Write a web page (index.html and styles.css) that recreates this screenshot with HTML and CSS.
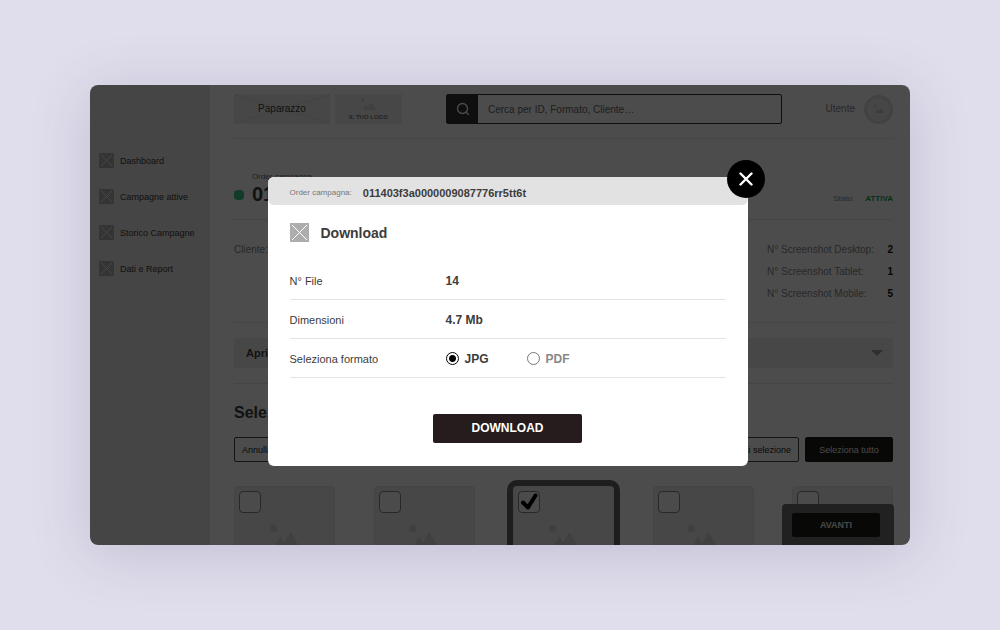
FILE: index.html
```html
<!DOCTYPE html>
<html lang="it">
  <head>
    <meta charset="UTF-8" />
    <meta name="viewport" content="width=device-width, initial-scale=1.0" />

    <title>Order campagna - Download</title>
    <link rel="stylesheet" href="styles.css" />
  </head>
  <body>
    <!-- shared shapes -->
    <svg class="symbols" width="0" height="0" aria-hidden="true">
      <symbol id="box" viewBox="0 0 19 19">
        <rect width="19" height="19" fill="#adadad" />
        <path d="M2 2l15 15M17 2L2 17" stroke="#fff" stroke-width="1" />
      </symbol>
      <symbol id="photo" viewBox="0 0 30 24">
        <circle cx="3.500" cy="4.500" r="3.800" />
        <path d="M3.500 24L10.500 12l6 12z" />
        <path d="M11 24L20.500 8 30 24z" />
      </symbol>
    </svg>

    <div class="window">
      <nav class="sidebar">
        <a href="#"><svg class="nav-icon"><use href="#box" /></svg>Dashboard</a>
        <a href="#"><svg class="nav-icon"><use href="#box" /></svg>Campagne attive</a>
        <a href="#"><svg class="nav-icon"><use href="#box" /></svg>Storico Campagne</a>
        <a href="#"><svg class="nav-icon"><use href="#box" /></svg>Dati e Report</a>
      </nav>

      <main class="content">
        <header class="topbar">
          <div class="brand">
            <svg class="brand-cross" viewBox="0 0 96 30" preserveAspectRatio="none">
              <path d="M1 1l94 28M95 1L1 29" stroke="#dcdcdc" fill="none" />
            </svg>
            <span>Paparazzo</span>
          </div>
          <div class="client-logo">
            <svg class="logo-photo"><use href="#photo" /></svg>
            <span>IL TUO LOGO</span>
          </div>
          <form class="search">
            <button type="button" aria-label="Cerca">
              <svg width="14" height="14" viewBox="0 0 14 14" fill="none" stroke="#fff" stroke-width="1.300" stroke-linecap="round">
                <circle cx="6.500" cy="6.500" r="5" />
                <path d="M10.200 10.200l2.300 2.300" />
              </svg>
            </button>
            <input type="text" aria-label="Cerca" placeholder="Cerca per ID, Formato, Cliente…" />
          </form>
          <div class="user">
            <span>Utente</span>
            <div class="avatar"><svg class="avatar-photo"><use href="#photo" /></svg></div>
          </div>
        </header>

        <section class="order">
          <span class="status-dot"></span>
          <div class="order-id">
            <p>Order campagna</p>
            <h1>011</h1>
          </div>
          <p class="status">Stato: <strong>ATTIVA</strong></p>
        </section>

        <section class="details">
          <p>Cliente:</p>
          <dl>
            <div><dt>N° Screenshot Desktop:</dt><dd>2</dd></div>
            <div><dt>N° Screenshot Tablet:</dt><dd>1</dd></div>
            <div><dt>N° Screenshot Mobile:</dt><dd>5</dd></div>
          </dl>
        </section>

        <section class="accordion">
          <button type="button">
            Apri
            <svg width="12" height="6" viewBox="0 0 12 6"><path d="M0 0h12L6 6z" fill="#999" /></svg>
          </button>
        </section>

        <section class="selection">
          <h2>Seleziona</h2>
          <div class="actions">
            <button type="button" class="btn">Annulla</button>
            <button type="button" class="btn push">Inverti selezione</button>
            <button type="button" class="btn btn-dark">Seleziona tutto</button>
          </div>
          <div class="cards">
            <div class="card">
              <input type="checkbox" aria-label="Screenshot 1" />
              <svg class="card-photo"><use href="#photo" /></svg>
            </div>
            <div class="card">
              <input type="checkbox" aria-label="Screenshot 2" />
              <svg class="card-photo"><use href="#photo" /></svg>
            </div>
            <div class="card selected">
              <input type="checkbox" aria-label="Screenshot 3" checked />
              <svg class="tick" viewBox="0 0 22 22" fill="none" stroke="#000" stroke-width="4" stroke-linecap="round" stroke-linejoin="round">
                <path d="M5 11.500l5 5 7.500-12" />
              </svg>
              <svg class="card-photo"><use href="#photo" /></svg>
            </div>
            <div class="card">
              <input type="checkbox" aria-label="Screenshot 4" />
              <svg class="card-photo"><use href="#photo" /></svg>
            </div>
            <div class="card">
              <input type="checkbox" aria-label="Screenshot 5" />
              <svg class="card-photo"><use href="#photo" /></svg>
            </div>
          </div>
        </section>
      </main>

      <div class="next-bar">
        <button type="button">AVANTI</button>
      </div>

      <div class="overlay">
        <div class="modal" role="dialog" aria-labelledby="modalTitle">
          <button type="button" class="close" aria-label="Chiudi">
            <svg width="14" height="14" viewBox="0 0 14 14" fill="none" stroke="#fff" stroke-width="2.400" stroke-linecap="round">
              <path d="M1.500 1.500l11 11M12.500 1.500l-11 11" />
            </svg>
          </button>
          <div class="modal-header">
            <span>Order campagna:</span>
            <strong>011403f3a0000009087776rr5tt6t</strong>
          </div>
          <form class="modal-body">
            <h3 id="modalTitle"><svg class="title-icon"><use href="#box" /></svg>Download</h3>
            <div class="row">
              <span class="row-label">N° File</span>
              <strong>14</strong>
            </div>
            <div class="row">
              <span class="row-label">Dimensioni</span>
              <strong>4.7 Mb</strong>
            </div>
            <div class="row">
              <span class="row-label">Seleziona formato</span>
              <div class="formats">
                <input type="radio" id="jpg" name="format" checked />
                <label for="jpg">JPG</label>
                <input type="radio" id="pdf" name="format" />
                <label for="pdf">PDF</label>
              </div>
            </div>
            <button type="button" class="download">DOWNLOAD</button>
          </form>
        </div>
      </div>
    </div>
  </body>
</html>
```
FILE: styles.css
```css
* {
  box-sizing: border-box;
}

body {
  height: 100vh;
  margin: 0;
  padding: 85px 90px;
  background-color: #e0deec;
  font-family: "Liberation Sans", Arial, sans-serif;
  font-size: 10px;
  line-height: 12px;
  color: #3c3c3c;
}

h1,
h2,
h3,
p,
dl,
dd {
  margin: 0;
}

button,
input {
  font-family: inherit;
}

button {
  padding: 0;
  border: none;
  cursor: pointer;
}

.symbols {
  position: absolute;
}

.window {
  position: relative;
  display: flex;
  height: 100%;
  overflow: hidden;
  border-radius: 8px;
  background-color: #fff;
  box-shadow: 0 8px 60px rgba(70, 60, 110, 0.2);
}

/* sidebar */
.sidebar {
  display: flex;
  flex-direction: column;
  flex: none;
  gap: 21px;
  width: 120px;
  padding: 68px 0 0 9px;
  background-color: #e6e6e6;
}

.sidebar a {
  display: flex;
  align-items: center;
  gap: 6px;
  color: #3c3c3c;
  text-decoration: none;
  white-space: nowrap;
  font-size: 9px;
}

.nav-icon {
  width: 15px;
  height: 15px;
}

/* main column */
.content {
  flex: 1;
  min-width: 0;
  padding: 0 17px 0 24px;
}

.topbar {
  display: flex;
  align-items: center;
  padding: 9px 0 14px;
  border-bottom: 1px solid #e6e6e6;
}

.brand,
.client-logo {
  flex: none;
  height: 30px;
  background-color: #efefef;
}

.brand {
  position: relative;
  display: grid;
  place-items: center;
  width: 96px;
}

.brand span {
  position: relative;
}

.brand-cross {
  position: absolute;
  width: 100%;
  height: 100%;
}

.client-logo {
  display: flex;
  flex-direction: column;
  align-items: center;
  width: 67px;
  margin-left: 5px;
  padding-top: 4px;
  font-size: 6px;
  font-weight: bold;
  color: #777;
}

.logo-photo {
  width: 15px;
  height: 12px;
  margin-bottom: 1px;
  fill: #d8d8d8;
}

.search {
  display: flex;
  flex: 0 1 336px;
  height: 30px;
  margin-left: 44px;
  border: 1px solid #333;
  border-radius: 2px;
}

.search button {
  display: grid;
  place-items: center;
  width: 31px;
  background-color: #333;
}

.search input {
  flex: 1;
  min-width: 0;
  padding: 0 10px;
  border: none;
  background: none;
  font-size: 10px;
}

.search input::placeholder {
  color: #666;
}

.user {
  display: flex;
  align-items: center;
  gap: 9px;
  margin-left: auto;
  color: #888;
}

.avatar {
  display: grid;
  place-items: center;
  width: 29px;
  height: 29px;
  border: 3px solid #dcdcdc;
  border-radius: 50%;
  background-color: #ececec;
}

.avatar-photo {
  width: 10px;
  height: 8px;
  fill: #c8c8c8;
}

.order {
  display: flex;
  align-items: flex-end;
  height: 81px;
  padding-bottom: 14px;
  border-bottom: 1px solid #e6e6e6;
}

.status-dot {
  width: 10px;
  height: 10px;
  margin: 0 8px 5px 0;
  border-radius: 4px;
  background-color: #3fc68a;
}

.order-id p {
  font-size: 8px;
  color: #666;
}

.order-id h1 {
  font-size: 20px;
  line-height: 22px;
}

.status {
  margin-left: auto;
  font-size: 8px;
  color: #888;
}

.status strong {
  margin-left: 9px;
  color: #00a85a;
}

.details {
  display: flex;
  justify-content: space-between;
  height: 103px;
  padding-top: 24px;
  border-bottom: 1px solid #e6e6e6;
  color: #888;
}

.details dl {
  display: grid;
  align-content: start;
  gap: 10px;
  width: 126px;
}

.details dl div {
  display: flex;
  justify-content: space-between;
  white-space: nowrap;
}

.details dd {
  font-weight: bold;
  color: #111;
}

.accordion {
  padding: 15px 0;
  border-bottom: 1px solid #e6e6e6;
}

.accordion button {
  display: flex;
  align-items: center;
  justify-content: space-between;
  width: 100%;
  height: 30px;
  padding: 0 10px 0 12px;
  background-color: #ededed;
  color: #3c3c3c;
  font-size: 11px;
  font-weight: bold;
}

.selection {
  padding-top: 19px;
}

.selection h2 {
  font-size: 16px;
  line-height: 20px;
}

.actions {
  display: flex;
  gap: 6px;
  margin-top: 14px;
}

.btn {
  height: 25px;
  padding: 0 7px;
  border: 1px solid #444;
  border-radius: 2px;
  background-color: #fff;
  color: #222;
  font-size: 9px;
}

.push {
  margin-left: auto;
}

.btn-dark {
  min-width: 88px;
  background-color: #1b1b14;
  border-color: #1b1b14;
  color: #eee;
}

.cards {
  display: grid;
  grid-template-columns: repeat(5, 101px);
  justify-content: space-between;
  margin-top: 24px;
}

.card {
  position: relative;
  height: 102px;
  padding: 4px;
  border: 1px solid #e3e3e3;
  border-radius: 4px;
  background-color: #ededed;
}

.selected {
  outline: 6px solid #666;
}

.card input {
  appearance: none;
  display: block;
  width: 22px;
  height: 22px;
  margin: 0;
  border: 1px solid #888;
  border-radius: 4px;
  background-color: #fafafa;
}

.tick {
  position: absolute;
  top: 4px;
  left: 4px;
  width: 22px;
  height: 22px;
}

.card-photo {
  display: block;
  width: 30px;
  height: 24px;
  margin: 11px auto 0;
  fill: #d6d6d6;
}

.next-bar {
  position: absolute;
  right: 16px;
  bottom: 0;
  padding: 9px 14px 8px 10px;
  border-radius: 4px 4px 0 0;
  background-color: #717171;
}

.next-bar button {
  width: 88px;
  height: 24px;
  border-radius: 2px;
  background-color: #1b1b14;
  color: #eee;
  font-size: 9px;
  font-weight: bold;
}

/* modal */
.overlay {
  position: absolute;
  inset: 0;
  display: grid;
  place-items: center;
  padding: 12px 0 0 15px;
  background-color: rgba(0, 0, 0, 0.7);
}

.modal {
  position: relative;
  width: 480px;
  max-width: 100%;
  border-radius: 6px;
  background-color: #fff;
}

.close {
  position: absolute;
  top: -17px;
  right: -17px;
  display: grid;
  place-items: center;
  width: 38px;
  height: 38px;
  border-radius: 50%;
  background-color: #000;
}

.modal-header {
  display: flex;
  align-items: center;
  gap: 11px;
  height: 28px;
  padding: 4px 22px 0;
  border-radius: 6px;
  background-color: #e2e2e2;
  font-size: 11px;
}

.modal-header span {
  font-size: 8px;
  color: #777;
}

.modal-body {
  padding: 18px 22px 23px;
}

.modal-body h3 {
  display: flex;
  align-items: center;
  gap: 12px;
  margin-bottom: 18px;
  font-size: 14px;
  line-height: 20px;
}

.title-icon {
  width: 19px;
  height: 19px;
}

.row {
  display: flex;
  align-items: center;
  height: 39px;
  padding-top: 2px;
  border-bottom: 1px solid #e3e3e3;
  font-size: 12px;
}

.row-label {
  width: 156px;
  font-size: 11px;
}

.formats {
  display: flex;
  align-items: center;
}

.formats input {
  appearance: none;
  width: 13px;
  height: 13px;
  margin: 0;
  border: 1px solid #777;
  border-radius: 50%;
}

.formats input:checked {
  border: 1px solid #000;
  background: radial-gradient(#000 3px, #fff 4px);
}

.formats label {
  margin: 0 38px 0 6px;
  font-weight: bold;
  color: #888;
}

.formats input:checked + label {
  color: #3c3c3c;
}

.download {
  display: block;
  width: 149px;
  height: 29px;
  margin: 36px auto 0;
  border-radius: 2px;
  background-color: #261c1d;
  color: #fff;
  font-size: 12px;
  font-weight: bold;
}
```
